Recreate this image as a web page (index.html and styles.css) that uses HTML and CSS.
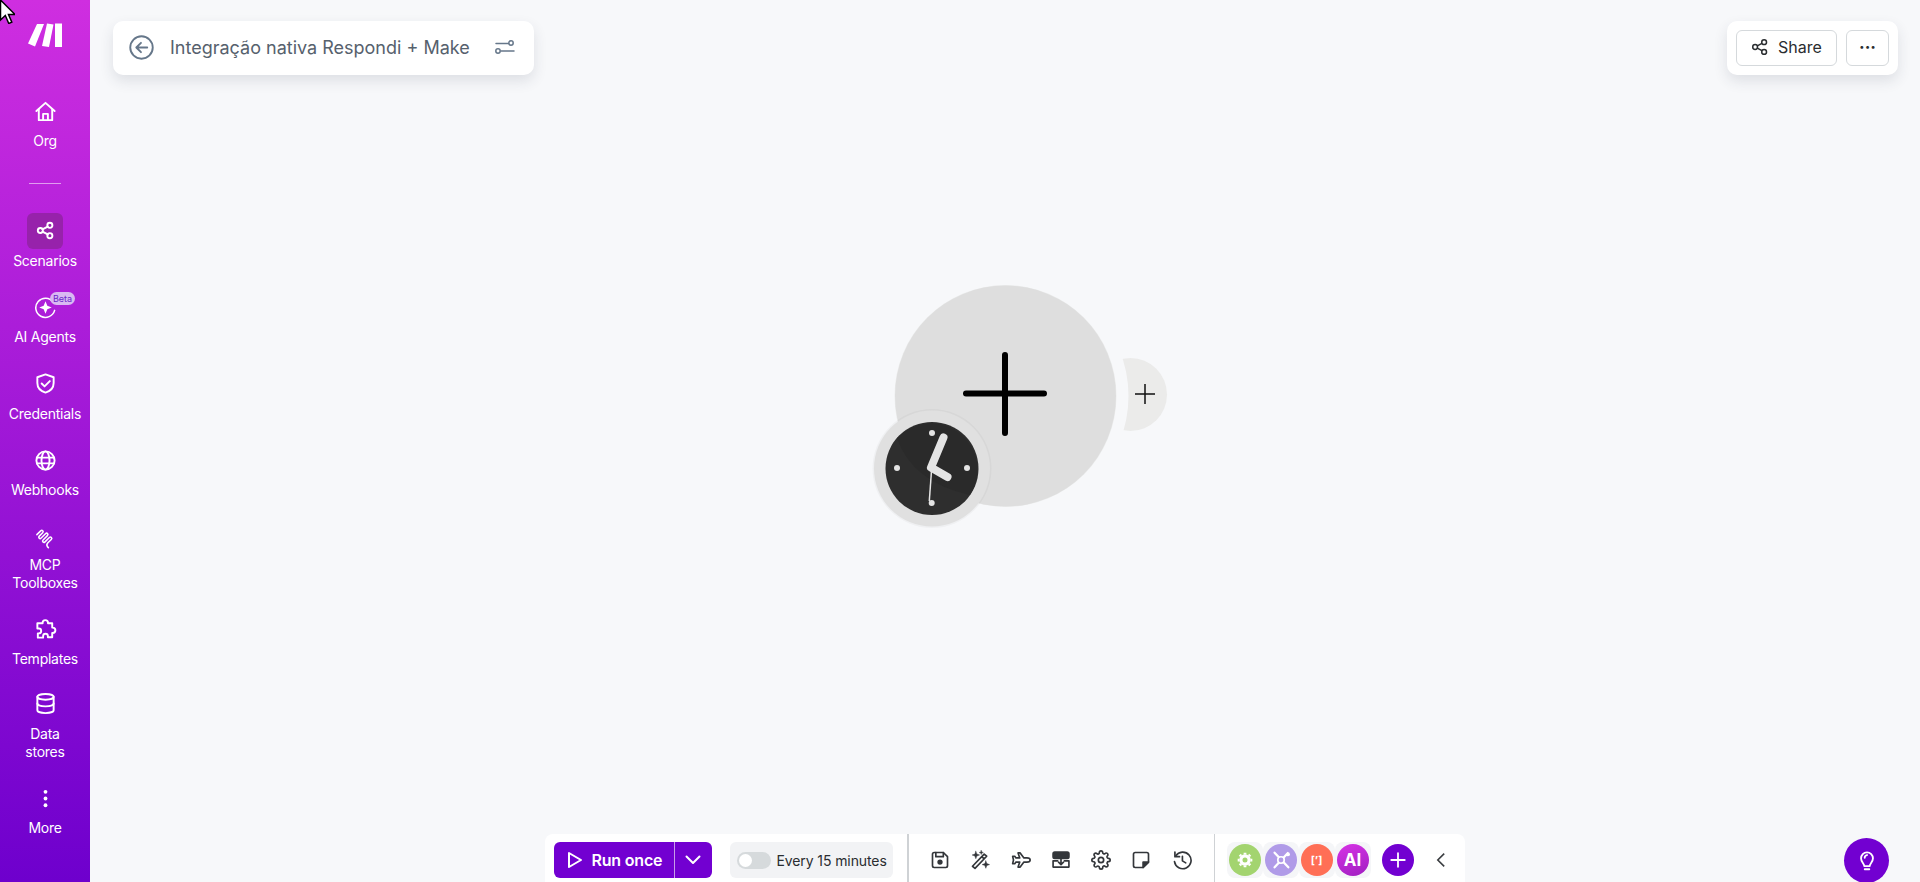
FILE: index.html
```html
<!DOCTYPE html>
<html lang="en">
<head>
    <meta charset="UTF-8">
    <meta name="viewport" content="width=device-width, initial-scale=1.0">
    <title>Integração nativa Respondi + Make</title>
    <link rel="stylesheet" href="styles.css">
</head>
<body>
    <aside class="sidebar">
        <svg class="logo" viewBox="0 0 34 24" fill="#fff">
            <path d="M9 1h7L7 23.500 0 20.500z"/>
            <path d="M19 0.500l6.500 1L21 24l-7-1z"/>
            <path d="M27 0.500h7V24h-7z"/>
        </svg>

        <nav class="nav">
            <a class="nav-item">
                <span class="nav-icon">
                    <svg viewBox="0 0 24 24"><path d="M2.500 11.500L12 3l9.500 8.500"/><path d="M5 9.500V21h14V9.500"/><path d="M9.500 21v-6.500h5V21"/></svg>
                </span>
                <span class="nav-label">Org</span>
            </a>
            <div class="nav-divider"></div>
            <a class="nav-item active">
                <span class="nav-icon icon-small">
                    <svg viewBox="0 0 24 24"><circle cx="5.500" cy="12" r="3.200"/><circle cx="17.500" cy="5.500" r="3.200"/><circle cx="17.500" cy="18.500" r="3.200"/><path d="M8.200 10.600l6.600-3.600M8.200 13.400l6.600 3.600"/></svg>
                </span>
                <span class="nav-label">Scenarios</span>
            </a>
            <a class="nav-item">
                <span class="nav-icon">
                    <svg viewBox="0 0 24 24"><path class="thin" d="M20 6.500A10 10 0 1 0 21.500 15"/><path class="solid" d="M12 5.500l1.900 4.600 4.600 1.900-4.600 1.900-1.900 4.600-1.900-4.600L5.500 12l4.600-1.900z"/></svg>
                    <span class="beta">Beta</span>
                </span>
                <span class="nav-label">AI Agents</span>
            </a>
            <a class="nav-item">
                <span class="nav-icon">
                    <svg viewBox="0 0 24 24"><path d="M12 2.500l8.500 3v6c0 5-3.500 8.500-8.500 10-5-1.500-8.500-5-8.500-10v-6z"/><path d="M8 12l3 3 5.500-5.500"/></svg>
                </span>
                <span class="nav-label">Credentials</span>
            </a>
            <a class="nav-item">
                <span class="nav-icon">
                    <svg viewBox="0 0 24 24"><circle cx="12" cy="12" r="9.500"/><ellipse cx="12" cy="12" rx="4.200" ry="9.500"/><path d="M3 9h18M3 15h18"/></svg>
                </span>
                <span class="nav-label">Webhooks</span>
            </a>
            <a class="nav-item item-tight">
                <span class="nav-icon icon-low">
                    <svg viewBox="0 0 24 24"><path class="thin" d="M3 8l4-4c1.500-1.500 3.500.5 2 2L5.500 9.500c-1.500 1.500.5 3.500 2 2L12 7c1.500-1.500 3.500.5 2 2l-4.500 4.500c-1.500 1.500.5 3.500 2 2L16 11c1.500-1.500 3.500.5 2 2l-3.500 3.500c-1.500 1.500-1.500 2.500-.5 4l1 1"/></svg>
                </span>
                <span class="nav-label">MCP<br>Toolboxes</span>
            </a>
            <a class="nav-item">
                <span class="nav-icon">
                    <svg viewBox="0 0 24 24"><path d="M9 5.500V5a2.800 2.800 0 0 1 5.600 0v.500H19v4.500h.500a2.800 2.800 0 0 1 0 5.600H19V20h-4.500v-1a2.500 2.500 0 0 0-5 0v1.500H4V16h1a2.500 2.500 0 0 0 0-5H3.500V5.500z"/></svg>
                </span>
                <span class="nav-label">Templates</span>
            </a>
            <a class="nav-item item-tight">
                <span class="nav-icon">
                    <svg viewBox="0 0 24 24"><ellipse cx="12" cy="5" rx="8.500" ry="3"/><path d="M3.500 5v14c0 1.700 3.800 3 8.500 3s8.500-1.300 8.500-3V5"/><path d="M3.500 12c0 1.700 3.800 3 8.500 3s8.500-1.300 8.500-3"/></svg>
                </span>
                <span class="nav-label">Data<br>stores</span>
            </a>
            <a class="nav-item">
                <span class="nav-icon">
                    <svg viewBox="0 0 24 24"><circle class="solid" cx="12" cy="5" r="2"/><circle class="solid" cx="12" cy="12" r="2"/><circle class="solid" cx="12" cy="19" r="2"/></svg>
                </span>
                <span class="nav-label">More</span>
            </a>
        </nav>
    </aside>

    <main class="canvas">
        <header class="top-row">
            <div class="title-card">
                <svg class="back-icon" viewBox="0 0 24 24"><circle cx="12" cy="12" r="10.800"/><path d="M17.500 12H7M11.500 7.500L7 12l4.500 4.500"/></svg>
                <span class="title">Integração nativa Respondi + Make</span>
                <svg class="tune-icon" viewBox="0 0 20 16"><path d="M1 4.500h12.500M6 12h13"/><circle cx="16" cy="4" r="2.200"/><circle cx="3" cy="12" r="2.200"/></svg>
            </div>
            <div class="share-card">
                <button class="btn-share">
                    <svg viewBox="0 0 24 24"><circle cx="5.500" cy="12" r="3.200"/><circle cx="17.500" cy="5.500" r="3.200"/><circle cx="17.500" cy="18.500" r="3.200"/><path d="M8.400 10.500l6.200-3.400M8.400 13.500l6.200 3.400"/></svg>
                    Share
                </button>
                <button class="btn-more">&middot;&middot;&middot;</button>
            </div>
        </header>

        <!-- modulo vazio no canvas -->
        <svg class="node" viewBox="870 280 300 250">
            <circle class="moon" cx="1130.500" cy="394.500" r="36.500"/>
            <circle class="node-gap" cx="1005.500" cy="396" r="123"/>
            <circle class="node-shadow" cx="1005.500" cy="396" r="111"/>
            <circle class="node-body" cx="1005.500" cy="396" r="110.500"/>
            <path class="plus-big" d="M1005 355v78M966 393.500h78"/>
            <path class="plus-small" d="M1145 384v20M1135 394h20"/>
            <circle class="clock-shadow" cx="932" cy="468.500" r="59.500"/>
            <circle class="clock-rim" cx="932" cy="468.500" r="58"/>
            <circle class="clock-face" cx="932" cy="468.500" r="46.500"/>
            <path class="clock-shade" d="M897 438Q912 482 970 495A46.500 46.500 0 0 0 897 438z"/>
            <path class="hand-sec" d="M931.700 468l-2.400 33"/>
            <path class="hand" d="M931 467.500l12.500-30M931 467.500l16.500 9.500"/>
            <circle class="mark" cx="932" cy="433" r="3"/>
            <circle class="mark" cx="897" cy="468" r="3"/>
            <circle class="mark" cx="967" cy="468" r="3"/>
            <circle class="mark" cx="931.700" cy="503" r="3"/>
        </svg>

        <footer class="bottom-row">
            <div class="toolbar">
                <div class="run-btn">
                    <span class="run-main">
                        <svg viewBox="0 0 16 18"><path d="M2 2l12 7-12 7z"/></svg>
                        Run once
                    </span>
                    <span class="run-arrow">
                        <svg viewBox="0 0 16 10"><path d="M1.500 1.500L8 8l6.500-6.500"/></svg>
                    </span>
                </div>
                <div class="schedule">
                    <span class="switch"></span>
                    <span>Every 15 minutes</span>
                </div>
                <div class="tools">
                    <svg viewBox="0 0 24 24"><path d="M3 5a2 2 0 0 1 2-2h11l5 5v11a2 2 0 0 1-2 2H5a2 2 0 0 1-2-2z"/><path d="M7 3v5h9V3"/><circle class="solid" cx="12" cy="14.500" r="2.200"/></svg>
                    <svg viewBox="0 0 24 24"><path d="M3 19.500L17 5l3 2.500L6 22zM14 8l3 2.500"/><path class="solid thin" d="M7 1.500l1.200 3.300 3.300 1.200-3.300 1.200L7 10.500 5.800 7.200 2.500 6l3.300-1.200zM19 13l1.200 3.300 3.300 1.200-3.300 1.200L19 22l-1.200-3.300-3.300-1.200 3.300-1.200zM13.500 0.500l.7 1.800 1.800.7-1.800.7-.7 1.800-.7-1.800L11 3l1.800-.7z"/></svg>
                    <svg viewBox="0 0 24 24"><path d="M23 12c0-1.500-2-2.500-4-2.500h-3.500L11 3.500H8.500l2 6H6L4.500 7.500H2l1 4.500-1 4.500h2.500L6 14.500h4.500l-2 6H11l4.500-6H19c2 0 4-1 4-2.500z"/></svg>
                    <svg viewBox="0 0 24 24"><rect class="solid" x="2.500" y="2.500" width="19" height="7.500" rx="2"/><path d="M8 13H2.500v7.500h19V13H16"/><path d="M12 10.500v7M9 14.500l3 3 3-3"/></svg>
                    <svg viewBox="0 0 24 24"><circle cx="12" cy="12" r="3.200"/><path d="M19.400 15a1.650 1.650 0 0 0 .33 1.820l.06.06a2 2 0 0 1 0 2.830 2 2 0 0 1-2.830 0l-.06-.06a1.650 1.650 0 0 0-1.820-.33 1.650 1.650 0 0 0-1 1.510V21a2 2 0 0 1-2 2 2 2 0 0 1-2-2v-.09A1.650 1.650 0 0 0 9 19.400a1.650 1.650 0 0 0-1.820.33l-.06.06a2 2 0 0 1-2.830 0 2 2 0 0 1 0-2.830l.06-.06a1.650 1.650 0 0 0 .33-1.820 1.650 1.650 0 0 0-1.510-1H3a2 2 0 0 1-2-2 2 2 0 0 1 2-2h.09A1.650 1.650 0 0 0 4.600 9a1.650 1.650 0 0 0-.33-1.820l-.06-.06a2 2 0 0 1 0-2.830 2 2 0 0 1 2.830 0l.06.06a1.650 1.650 0 0 0 1.820.33H9a1.650 1.650 0 0 0 1-1.510V3a2 2 0 0 1 2-2 2 2 0 0 1 2 2v.09a1.650 1.650 0 0 0 1 1.510 1.650 1.650 0 0 0 1.820-.33l.06-.06a2 2 0 0 1 2.830 0 2 2 0 0 1 0 2.830l-.06.06a1.650 1.650 0 0 0-.33 1.820V9a1.650 1.650 0 0 0 1.510 1H21a2 2 0 0 1 2 2 2 2 0 0 1-2 2h-.09a1.650 1.650 0 0 0-1.510 1z"/></svg>
                    <svg viewBox="0 0 24 24"><path d="M14.500 21H5a2 2 0 0 1-2-2V5a2 2 0 0 1 2-2h14a2 2 0 0 1 2 2v9.500z"/><path class="solid" d="M14.500 21v-6.500H21z"/></svg>
                    <svg viewBox="0 0 24 24"><path d="M4.500 7A10 10 0 1 1 3 14"/><path d="M3.500 2.500V8H9"/><path d="M12.500 7.500V13l4 2.500"/></svg>
                </div>
                <div class="apps">
                    <span class="app-box"><span class="app app-green">
                        <svg viewBox="0 0 24 24"><circle cx="12" cy="12" r="4.500"/><path class="teeth" d="M12 4v2M12 18v2M4 12h2M18 12h2M6.300 6.300l1.500 1.500M16.200 16.200l1.500 1.500M17.700 6.300l-1.500 1.500M7.800 16.200l-1.500 1.500"/></svg>
                    </span></span>
                    <span class="app-box"><span class="app app-purple">
                        <svg viewBox="0 0 24 24"><path d="M5 4l15 16M19 5L5 20"/><path class="wrench" d="M22 6.500a4 4 0 0 1-5 .5L19 3a4 4 0 0 1 3 3.500z"/><circle class="hole" cx="12" cy="12" r="3.500"/></svg>
                    </span></span>
                    <span class="app-box"><span class="app app-orange">[&rsquo;]</span></span>
                    <span class="app-box"><span class="app app-ai">AI</span></span>
                    <span class="app-add">
                        <svg viewBox="0 0 20 20"><path d="M10 2.500v15M2.500 10h15"/></svg>
                    </span>
                    <svg class="collapse" viewBox="0 0 12 20"><path d="M10 2L2 10l8 8"/></svg>
                </div>
            </div>
            <div class="help-slot">
                <span class="help-btn">
                    <svg viewBox="0 0 24 24"><path d="M9 17.500c0-3-3.500-4-3.500-8.500a6.500 6.500 0 0 1 13 0c0 4.500-3.500 5.500-3.500 8.500z"/><path d="M9.500 8.500A3 3 0 0 1 12 5.500"/><path d="M9.500 21h5"/></svg>
                </span>
            </div>
        </footer>
    </main>

    <svg class="cursor" viewBox="0 0 15 24"><path d="M.5 0v20l4.800-4.500 3.500 8 3-1.400-3.300-7.600H15z"/></svg>
</body>
</html>
```

FILE: styles.css
```css
* {
    box-sizing: border-box;
}

html, body {
    height: 100%;
}

body {
    margin: 0;
    display: flex;
    overflow: hidden;
    font-family: 'Inter', sans-serif;
    background-color: #f7f8fa;
    color: #2a2d30;
}

/* barra lateral */
.sidebar {
    width: 90px;
    flex-shrink: 0;
    display: flex;
    flex-direction: column;
    align-items: center;
    padding-top: 23px;
    background: linear-gradient(180deg, #cf2ee0 0%, #6e00cd 100%);
    color: #fff;
}

.logo {
    width: 34px;
    height: 24px;
    flex-shrink: 0;
}

.nav {
    width: 100%;
    margin-top: 46px;
    display: flex;
    flex-direction: column;
    align-items: center;
    gap: 19.500px;
}

.nav-item {
    width: 100%;
    display: flex;
    flex-direction: column;
    align-items: center;
    gap: 4px;
}

.item-tight {
    margin-top: -2px;
}

.nav-icon {
    position: relative;
    width: 36px;
    height: 36px;
    border-radius: 6px;
    display: flex;
    align-items: center;
    justify-content: center;
}

.nav-icon svg {
    width: 23px;
    height: 23px;
    fill: none;
    stroke: #fff;
    stroke-width: 2;
    stroke-linecap: round;
    stroke-linejoin: round;
}

.nav-icon svg .solid {
    fill: #fff;
    stroke: none;
}

.nav-icon svg .thin {
    stroke-width: 1.600;
}

.icon-small svg {
    width: 19px;
    height: 19px;
    stroke-width: 2.400;
}

.icon-low {
    top: 4px;
}

.active .nav-icon {
    background-color: #9722ab;
}

.nav-label {
    width: 74px;
    margin-top: -1px;
    font-size: 14px;
    line-height: 18px;
    text-align: center;
    letter-spacing: -0.25px;
    color: #fff;
}

.nav-divider {
    width: 32px;
    height: 1px;
    margin: 13.500px 0 9px;
    background-color: rgba(255, 255, 255, 0.55);
}

.beta {
    position: absolute;
    top: 3px;
    left: 23px;
    width: 25px;
    height: 13px;
    border-radius: 7px;
    background-color: #d9b8f2;
    color: #6a26c9;
    font-size: 9px;
    line-height: 13px;
    text-align: center;
}

/* area do canvas */
.canvas {
    position: relative;
    flex: 1;
    display: flex;
    flex-direction: column;
    justify-content: space-between;
}

.top-row {
    display: flex;
    justify-content: space-between;
    align-items: flex-start;
    padding: 21px 22px 0 23px;
}

.title-card {
    width: 421px;
    height: 54px;
    display: flex;
    align-items: center;
    padding: 0 19px 0 16px;
    background: #fff;
    border-radius: 10px;
    box-shadow: 0 6px 14px rgba(40, 50, 70, 0.12);
}

.back-icon {
    width: 25px;
    height: 25px;
    margin-top: -2px;
    flex-shrink: 0;
    fill: none;
    stroke: #66778a;
    stroke-width: 1.800;
    stroke-linecap: round;
    stroke-linejoin: round;
}

.title {
    margin-left: 16px;
    margin-top: -1px;
    font-size: 18px;
    color: #56616d;
    white-space: nowrap;
}

.tune-icon {
    width: 20px;
    height: 16px;
    margin-left: auto;
    margin-top: -2px;
    fill: none;
    stroke: #66778a;
    stroke-width: 1.500;
    stroke-linecap: round;
}

.share-card {
    height: 54px;
    display: flex;
    align-items: center;
    gap: 9px;
    padding: 0 9px;
    background: #fff;
    border-radius: 10px;
    box-shadow: 0 6px 14px rgba(40, 50, 70, 0.12);
}

.btn-share, .btn-more {
    height: 36px;
    background: #fff;
    border: 1px solid #d5d9dc;
    border-radius: 6px;
    font-family: inherit;
    font-size: 16px;
    color: #2a2d30;
    display: flex;
    align-items: center;
    justify-content: center;
}

.btn-share {
    width: 101px;
    gap: 9px;
    padding-bottom: 3px;
}

.btn-share svg {
    width: 18px;
    height: 18px;
    fill: none;
    stroke: #2a2d30;
    stroke-width: 2;
}

.btn-more {
    width: 43px;
    font-size: 17px;
    font-weight: 700;
    padding: 0 0 3px;
}

/* modulo */
.node {
    position: absolute;
    left: 780px;
    top: 280px;
    width: 300px;
    height: 250px;
}

.moon {
    fill: #ebebea;
}

.node-gap {
    fill: #f7f8fa;
}

.node-shadow {
    fill: #eceded;
}

.node-body {
    fill: #dedede;
}

.plus-big {
    stroke: #000;
    stroke-width: 6;
    stroke-linecap: round;
    fill: none;
}

.plus-small {
    stroke: #111;
    stroke-width: 1.500;
    fill: none;
}

.clock-shadow {
    fill: #000;
    opacity: 0.03;
}

.clock-rim {
    fill: #e0e0e0;
}

.clock-face {
    fill: #2e2e2e;
}

.clock-shade {
    fill: #2a2a2a;
}

.hand {
    stroke: #e4e4e4;
    stroke-width: 8;
    stroke-linecap: round;
    fill: none;
}

.hand-sec {
    stroke: #e4e4e4;
    stroke-width: 1.500;
    fill: none;
}

.mark {
    fill: #e4e4e4;
}

/* barra inferior */
.bottom-row {
    display: grid;
    grid-template-columns: 1fr 920px 1fr;
    align-items: end;
}

.toolbar {
    grid-column: 2;
    height: 48px;
    display: flex;
    align-items: center;
    padding: 4px 0 0 8.500px;
    background: #fff;
    border-radius: 8px 8px 0 0;
}

.run-btn {
    width: 158px;
    height: 36px;
    display: flex;
    background-color: #7200d1;
    border-radius: 6px;
    color: #fff;
    font-size: 16px;
    font-weight: 600;
    letter-spacing: -0.2px;
}

.run-main {
    width: 121.500px;
    display: flex;
    align-items: center;
    gap: 9px;
    padding-left: 13px;
    padding-bottom: 1px;
    border-right: 1px solid #c89ce8;
}

.run-main svg {
    width: 16px;
    height: 18px;
    fill: none;
    stroke: #fff;
    stroke-width: 2;
    stroke-linejoin: round;
}

.run-arrow {
    flex: 1;
    display: flex;
    align-items: center;
    justify-content: center;
}

.run-arrow svg {
    width: 16px;
    height: 10px;
    fill: none;
    stroke: #fff;
    stroke-width: 2;
    stroke-linecap: round;
    stroke-linejoin: round;
}

.schedule {
    width: 163px;
    height: 36px;
    margin-left: 18px;
    display: flex;
    align-items: center;
    gap: 6px;
    padding-left: 7px;
    background-color: #f2f3f5;
    border-radius: 6px;
    font-size: 14px;
    letter-spacing: -0.1px;
    color: #2a2d30;
    white-space: nowrap;
}

.switch {
    position: relative;
    width: 34px;
    height: 17px;
    flex-shrink: 0;
    border-radius: 9px;
    background-color: #d6dadc;
}

.switch::before {
    content: '';
    position: absolute;
    left: 2px;
    top: 2px;
    width: 13px;
    height: 13px;
    border-radius: 50%;
    background-color: #fff;
}

.tools {
    align-self: stretch;
    margin: -4px 0 0 14px;
    width: 308px;
    display: flex;
    align-items: center;
    justify-content: space-between;
    padding: 4px 22px 0 21.500px;
    border-left: 2px solid #cfd2d5;
    border-right: 1px solid #cfd2d5;
}

.tools svg {
    width: 20px;
    height: 20px;
    fill: none;
    stroke: #33363a;
    stroke-width: 2;
    stroke-linecap: round;
    stroke-linejoin: round;
}

.tools svg .solid {
    fill: #33363a;
}

.tools svg .thin {
    stroke-width: 0.500;
}

.apps {
    display: flex;
    align-items: center;
    margin-left: 12px;
}

.app-box {
    width: 36px;
    height: 36px;
    display: flex;
    align-items: center;
    justify-content: center;
    background-color: #f5f6f8;
    border-radius: 8px;
}

.app {
    width: 32px;
    height: 32px;
    border-radius: 50%;
    display: flex;
    align-items: center;
    justify-content: center;
    color: #fff;
    font-weight: 700;
}

.app svg {
    width: 22px;
    height: 22px;
    fill: none;
    stroke: #fff;
    stroke-width: 2.500;
    stroke-linecap: round;
}

.app-green {
    background-color: #a3d46f;
}

.app-green svg {
    stroke-width: 3.500;
}

.app-green .teeth {
    stroke-width: 3;
    stroke-linecap: butt;
}

.app-purple {
    background-color: #b09be8;
}

.app-purple .hole {
    fill: #b09be8;
    stroke-width: 1.800;
}

.app-purple .wrench {
    fill: #fff;
    stroke: none;
}

.app-orange {
    background-color: #ff6f56;
    font-size: 11px;
}

.app-ai {
    background: linear-gradient(160deg, #d733e6, #a01fc0);
    font-size: 17px;
}

.app-add {
    width: 32px;
    height: 32px;
    margin-left: 11px;
    border-radius: 50%;
    background-color: #7200d1;
    display: flex;
    align-items: center;
    justify-content: center;
}

.app-add svg {
    width: 18px;
    height: 18px;
    fill: none;
    stroke: #fff;
    stroke-width: 2;
    stroke-linecap: round;
}

.collapse {
    width: 10px;
    height: 16px;
    margin-left: 22px;
    fill: none;
    stroke: #3a3d40;
    stroke-width: 2;
}

.help-slot {
    display: flex;
    justify-content: flex-end;
    padding-right: 31px;
}

.help-btn {
    width: 45px;
    height: 45px;
    margin-bottom: -1px;
    border-radius: 50%;
    background-color: #7200d1;
    display: flex;
    align-items: center;
    justify-content: center;
}

.help-btn svg {
    width: 22px;
    height: 22px;
    fill: none;
    stroke: #fff;
    stroke-width: 2;
    stroke-linecap: round;
    stroke-linejoin: round;
}

/* ponteiro do mouse capturado no print */
.cursor {
    position: absolute;
    left: 0;
    top: 0;
    width: 15px;
    height: 24px;
    fill: #fff;
    stroke: #000;
    stroke-width: 1.500;
}
```
